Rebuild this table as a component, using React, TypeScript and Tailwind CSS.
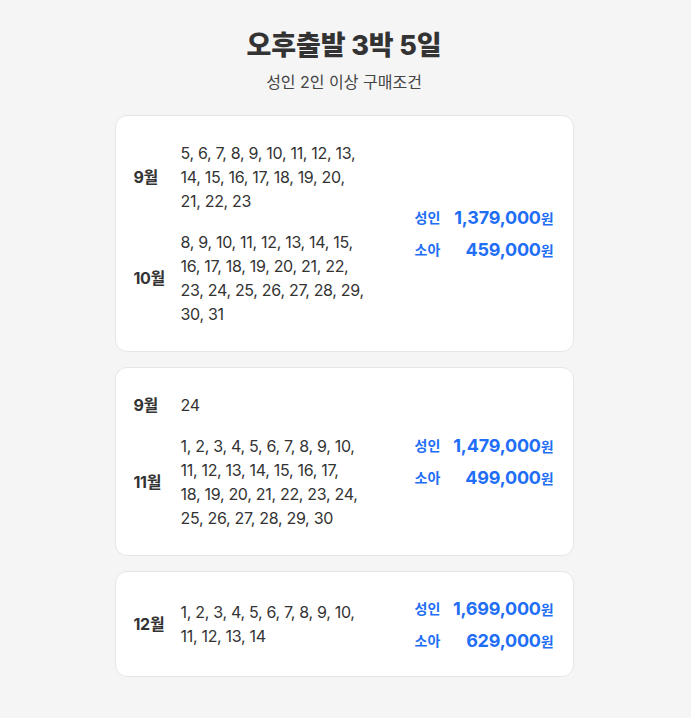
const plans = [
  {
    groups: [
      { month: '9월', lines: ['5, 6, 7, 8, 9, 10, 11, 12, 13,', '14, 15, 16, 17, 18, 19, 20,', '21, 22, 23'] },
      {
        month: '10월',
        lines: ['8, 9, 10, 11, 12, 13, 14, 15,', '16, 17, 18, 19, 20, 21, 22,', '23, 24, 25, 26, 27, 28, 29,', '30, 31'],
      },
    ],
    adult: '1,379,000',
    child: '459,000',
  },
  {
    groups: [
      { month: '9월', lines: ['24'] },
      {
        month: '11월',
        lines: ['1, 2, 3, 4, 5, 6, 7, 8, 9, 10,', '11, 12, 13, 14, 15, 16, 17,', '18, 19, 20, 21, 22, 23, 24,', '25, 26, 27, 28, 29, 30'],
      },
    ],
    adult: '1,479,000',
    child: '499,000',
  },
  {
    groups: [{ month: '12월', lines: ['1, 2, 3, 4, 5, 6, 7, 8, 9, 10,', '11, 12, 13, 14'] }],
    adult: '1,699,000',
    child: '629,000',
  },
];

function PriceRow({ label, price }: { label: string; price: string }) {
  return (
    <div className="flex items-center justify-between h-[22px]">
      <span className="text-[14px] font-semibold text-[#1f6ef5]">{label}</span>
      <span className="text-[18px] font-bold text-[#1f6ef5] tracking-[-0.2px]">
        {price}
        <span className="text-[14px] font-semibold">원</span>
      </span>
    </div>
  );
}

export default function App() {
  return (
    <div
      className="min-h-screen bg-[#f5f5f5] pt-7 pr-[3px] pb-10 text-[#333]"
      style={{ fontFamily: 'Inter, "Noto Sans CJK KR", sans-serif' }}
    >
      <h1 className="text-center text-[27px] font-extrabold leading-9 tracking-[-0.1px]">오후출발 3박 5일</h1>
      <p className="text-center text-[16px] leading-6 mt-[6px] text-[#444]">성인 2인 이상 구매조건</p>

      <div className="mx-auto mt-[21px] w-[459px] flex flex-col gap-[15px]">
        {plans.map((plan, i) => (
          <div
            key={i}
            className="bg-white border border-[#e6e6e6] rounded-xl pl-[18px] pr-[19px] py-[25px] flex items-center justify-between"
          >
            <div className="flex flex-col gap-[17px]">
              {plan.groups.map((g) => (
                <div key={g.month} className="flex items-center">
                  <span className="w-[47px] shrink-0 text-[16px] font-bold tracking-[-0.3px]">{g.month}</span>
                  <div className="w-[200px] text-[16px] leading-6 tracking-[-0.3px]">
                    {g.lines.map((line) => (
                      <div key={line}>{line}</div>
                    ))}
                  </div>
                </div>
              ))}
            </div>
            <div className="w-[139px] flex flex-col gap-[10px]">
              <PriceRow label="성인" price={plan.adult} />
              <PriceRow label="소아" price={plan.child} />
            </div>
          </div>
        ))}
      </div>
    </div>
  );
}
